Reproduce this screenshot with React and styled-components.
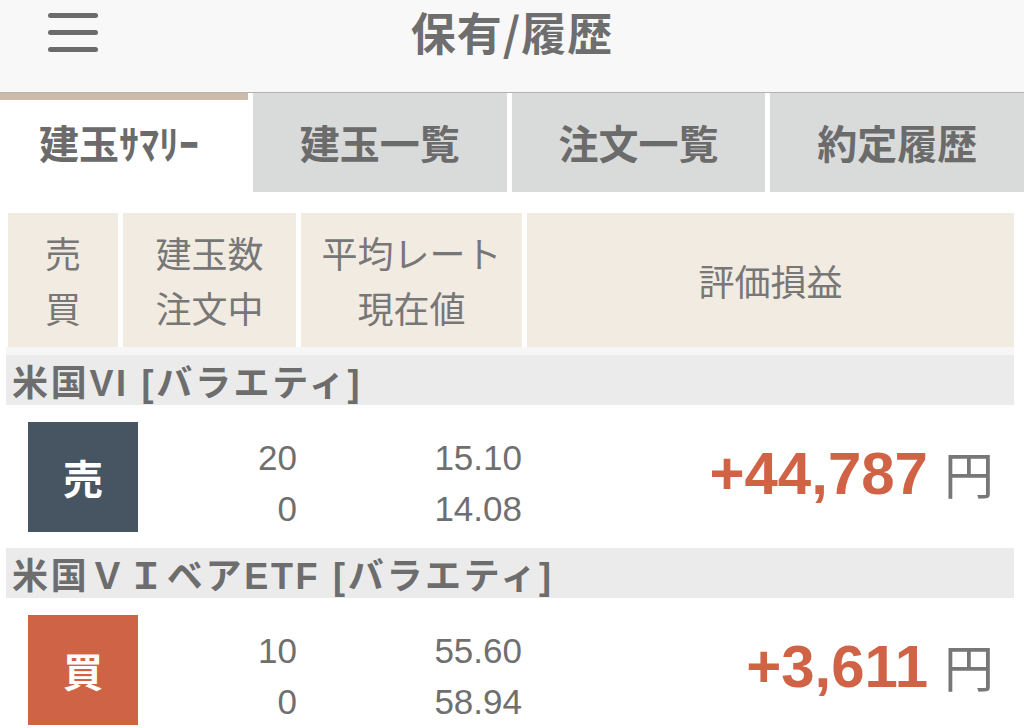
import React from "react";
import styled, { createGlobalStyle } from "styled-components";

const GlobalStyle = createGlobalStyle`
  html, body {
    margin: 0;
    padding: 0;
    background: #ffffff;
    font-family: "Liberation Sans", "Noto Sans CJK JP", sans-serif;
    color: #6e6e6e;
  }
`;

const Page = styled.div`
  width: 1024px;
  height: 728px;
  overflow: hidden;
  background: #fff;
`;

const Header = styled.header`
  height: 92px;
  border-bottom: 1px solid #b3b3b3;
  background: #f8f8f8;
  display: grid;
  grid-template-columns: 150px 1fr 150px;
  align-items: start;
`;

const MenuButton = styled.div`
  margin: 13px 0 0 48px;
  width: 50px;
  display: flex;
  flex-direction: column;
  gap: 12px;
  > span {
    display: block;
    height: 5px;
    border-radius: 3px;
    background: #6b6b6b;
  }
`;

const Title = styled.h1`
  margin: 0;
  padding-top: 2px;
  text-align: center;
  font-family: "Noto Sans CJK JP", sans-serif;
  font-size: 45px;
  line-height: 60px;
  font-weight: 700;
  letter-spacing: 1px;
  color: #6e6e6e;
`;

const Tabs = styled.nav`
  display: grid;
  grid-template-columns: 248px 1fr 1fr 1fr;
  gap: 5px;
  height: 99px;
`;

const Tab = styled.div`
  display: flex;
  align-items: center;
  justify-content: center;
  font-family: "Noto Sans CJK JP", sans-serif;
  font-size: 40px;
  font-weight: 700;
  color: #6b6b6b;
  background: ${(p) => (p.active ? "#ffffff" : "#d9dada")};
  border-top: ${(p) => (p.active ? "7px solid #cdbba7" : "none")};
  box-sizing: border-box;
  padding-bottom: ${(p) => (p.active ? "8px" : "2px")};
  padding-right: ${(p) => (p.active ? "10px" : "0")};
`;

const Table = styled.section`
  margin: 21px 10px 0 6px;
`;

const HeadRow = styled.div`
  display: grid;
  grid-template-columns: 110px 173px 221px 1fr;
  gap: 5px;
  padding-left: 2px;
`;

const HeadCell = styled.div`
  height: 134px;
  background: #f2ebe1;
  display: flex;
  align-items: center;
  justify-content: center;
  text-align: center;
  font-family: "Noto Sans CJK JP", sans-serif;
  font-size: 36px;
  line-height: 55px;
  color: #777;
`;

const Strip = styled.div`
  height: 8px;
  background: #f6f6f6;
`;

const GroupBar = styled.div`
  height: 50px;
  background: #ebebeb;
  display: flex;
  align-items: center;
  padding-left: 6px;
  font-size: 36px;
  letter-spacing: 2.7px;
  font-weight: 700;
  color: #6d6d6d;
  white-space: nowrap;
`;

const Row = styled.div`
  display: grid;
  grid-template-columns: 130px 159px 225px 1fr;
  align-items: center;
  height: 143px;
  padding-left: 2px;
`;

const Badge = styled.div`
  justify-self: end;
  width: 110px;
  height: 110px;
  background: ${(p) => (p.side === "sell" ? "#475462" : "#cf6346")};
  color: #fff;
  display: flex;
  align-items: center;
  justify-content: center;
  font-family: "Noto Sans CJK JP", sans-serif;
  font-size: 40px;
  font-weight: 700;
`;

const Nums = styled.div`
  text-align: right;
  font-size: 35px;
  line-height: 51px;
  color: #6f6f6f;
  margin-top: 12px;
`;

const Profit = styled.div`
  display: flex;
  justify-content: flex-end;
  align-items: baseline;
  padding-right: 20px;
  padding-bottom: 10px;
`;

const Amount = styled.span`
  font-size: 60px;
  font-weight: 700;
  color: #d06346;
`;

const Yen = styled.span`
  margin-left: 16px;
  font-family: "Noto Sans CJK JP", sans-serif;
  font-size: 50px;
  color: #777;
`;

const positions = [
  {
    name: "米国VI [バラエティ]",
    side: "sell",
    qty: "20",
    ordering: "0",
    avg: "15.10",
    now: "14.08",
    pl: "+44,787",
  },
  {
    name: "米国ＶＩベアETF [バラエティ]",
    side: "buy",
    qty: "10",
    ordering: "0",
    avg: "55.60",
    now: "58.94",
    pl: "+3,611",
  },
];

export default function App() {
  return (
    <Page>
      <GlobalStyle />
      <Header>
        <MenuButton>
          <span />
          <span />
          <span />
        </MenuButton>
        <Title>保有/履歴</Title>
        <div />
      </Header>
      <Tabs>
        <Tab active>建玉ｻﾏﾘｰ</Tab>
        <Tab>建玉一覧</Tab>
        <Tab>注文一覧</Tab>
        <Tab>約定履歴</Tab>
      </Tabs>
      <Table>
        <HeadRow>
          <HeadCell>売<br />買</HeadCell>
          <HeadCell>建玉数<br />注文中</HeadCell>
          <HeadCell>平均レート<br />現在値</HeadCell>
          <HeadCell>評価損益</HeadCell>
        </HeadRow>
        <Strip />
        {positions.map((p) => (
          <div key={p.name}>
            <GroupBar>{p.name}</GroupBar>
            <Row>
              <Badge side={p.side}>{p.side === "sell" ? "売" : "買"}</Badge>
              <Nums>{p.qty}<br />{p.ordering}</Nums>
              <Nums>{p.avg}<br />{p.now}</Nums>
              <Profit>
                <Amount>{p.pl}</Amount>
                <Yen>円</Yen>
              </Profit>
            </Row>
          </div>
        ))}
      </Table>
    </Page>
  );
}
